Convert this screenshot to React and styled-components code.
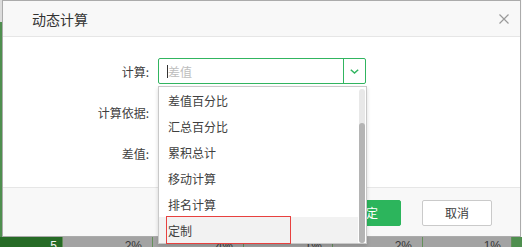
import styled, { createGlobalStyle } from "styled-components";

const GlobalStyle = createGlobalStyle`
  html, body {
    margin: 0;
    padding: 0;
  }
  body {
    font-family: "Noto Sans CJK SC", "Noto Sans", sans-serif;
    background: #fafafa;
  }
`;

const Screen = styled.div`
  position: relative;
  width: 522px;
  height: 247px;
  overflow: hidden;
`;

/* spreadsheet behind the modal */
const Backdrop = styled.div`
  display: flex;
  flex-direction: column;
  height: 100%;
`;

const SheetArea = styled.div`
  flex: 1;
  display: flex;
  justify-content: space-between;
  background: #fafafa;
`;

const SideStrip = styled.div`
  width: 2px;
  background: linear-gradient(#dcdcdc 0 22px, #4f8f4f 22px);
`;

const SheetRow = styled.div`
  display: flex;
  height: 10px;
  font-family: "Liberation Sans", Arial, sans-serif;
  font-size: 12px;
`;

const SheetCell = styled.div`
  width: ${(p) => p.$w}px;
  flex-shrink: 0;
  box-sizing: border-box;
  padding: 2px ${(p) => (p.$dark ? 5 : 10)}px 0 0;
  border-right: 1px solid #64905a;
  background: ${(p) => (p.$dark ? "#266b26" : "#a3a3a3")};
  color: ${(p) => (p.$dark ? "#f2f2f2" : "#3a3a3a")};
  text-align: right;
  line-height: 14px;
  overflow: hidden;
`;

const SheetRest = styled.div`
  flex: 1;
  background: #4f8f4f;
`;

/* modal */
const Dialog = styled.div`
  position: absolute;
  left: 2px;
  top: 0;
  width: 519px;
  height: 237px;
  box-sizing: border-box;
  border: 1px solid #ababab;
  background: #fff;
  display: flex;
  flex-direction: column;
`;

const Header = styled.div`
  height: 35px;
  flex-shrink: 0;
  display: flex;
  align-items: center;
  justify-content: space-between;
  padding: 0 11px 0 29px;
  background: #f8f8f8;
  border-bottom: 1px solid #e6e6e6;
`;

const Title = styled.div`
  font-size: 14px;
  color: #333;
`;

const CloseButton = styled.div`
  width: 10px;
  height: 10px;
  display: flex;
`;

const Body = styled.div`
  flex: 1;
  min-height: 0;
  display: flex;
  flex-direction: column;
  gap: 15px;
  padding-top: 21px;
`;

const FormRow = styled.div`
  display: flex;
  align-items: center;
  gap: 9px;
  height: 26px;
`;

const Label = styled.div`
  width: 146px;
  text-align: right;
  font-size: 12px;
  color: #404040;
`;

const SelectWrap = styled.div`
  position: relative;
  width: 208px;
  height: 26px;
`;

const SelectBox = styled.div`
  display: flex;
  height: 100%;
  box-sizing: border-box;
  border: 1px solid #31b560;
  border-radius: 2px;
`;

const InputArea = styled.div`
  flex: 1;
  display: flex;
  align-items: center;
  padding-left: 8px;
`;

const Caret = styled.span`
  width: 1px;
  height: 13px;
  background: #333;
`;

const Placeholder = styled.span`
  font-size: 12px;
  color: #bdbdbd;
`;

const ArrowBox = styled.div`
  width: 21px;
  border-left: 1px solid #31b560;
  display: flex;
  align-items: center;
  justify-content: center;
`;

const Dropdown = styled.div`
  position: absolute;
  top: calc(100% + 2px);
  left: 0;
  z-index: 10;
  width: 209px;
  height: 158px;
  box-sizing: border-box;
  border: 1px solid #c9c9c9;
  background: #fff;
  box-shadow: 0 2px 4px rgba(0, 0, 0, 0.15);
  display: flex;
`;

const OptionList = styled.div`
  flex: 1;
  display: flex;
  flex-direction: column;
`;

const Option = styled.div`
  position: relative;
  height: 26px;
  flex-shrink: 0;
  display: flex;
  align-items: center;
  padding-left: 9px;
  font-size: 12px;
  color: #404040;
  background: ${(p) => (p.$active ? "#f2f2f2" : "transparent")};
`;

const Marker = styled.div`
  position: absolute;
  left: 7px;
  top: -1px;
  width: 125px;
  height: 28px;
  box-sizing: border-box;
  border: 1px solid #e8413f;
  pointer-events: none;
`;

const ScrollTrack = styled.div`
  width: 6px;
  margin: 2px 1px 0 1px;
  border-radius: 3px;
  background: #e8e8e8;
  display: flex;
  flex-direction: column;
  justify-content: flex-end;
`;

const ScrollThumb = styled.div`
  height: 120px;
  border-radius: 3px;
  background: #b4b4b4;
`;

const Footer = styled.div`
  height: 49px;
  flex-shrink: 0;
  box-sizing: border-box;
  padding: 1px 28px 0 0;
  display: flex;
  align-items: center;
  justify-content: flex-end;
  gap: 21px;
  background: #f8f8f8;
  border-top: 1px solid #e6e6e6;
`;

const Button = styled.div`
  width: 70px;
  height: 26px;
  box-sizing: border-box;
  display: flex;
  align-items: center;
  justify-content: center;
  border-radius: 2px;
  font-size: 12px;
  border: 1px solid ${(p) => (p.$primary ? "#2cb55c" : "#cacaca")};
  background: ${(p) => (p.$primary ? "#2cb55c" : "#fff")};
  color: ${(p) => (p.$primary ? "#fff" : "#404040")};
`;

const cells = [
  { w: 63, v: "5", dark: true },
  { w: 90, v: "2%" },
  { w: 91, v: "4%" },
  { w: 89, v: "1%" },
  { w: 90, v: "2%" },
  { w: 89, v: "1%" },
];

const options = ["差值百分比", "汇总百分比", "累积总计", "移动计算", "排名计算", "定制"];

export default function App() {
  return (
    <Screen>
      <GlobalStyle />
      <Backdrop>
        <SheetArea>
          <SideStrip />
        </SheetArea>
        <SheetRow>
          {cells.map((c, i) => (
            <SheetCell key={i} $w={c.w} $dark={c.dark}>
              {c.v}
            </SheetCell>
          ))}
          <SheetRest />
        </SheetRow>
      </Backdrop>

      <Dialog>
        <Header>
          <Title>动态计算</Title>
          <CloseButton>
            <svg width="10" height="10" viewBox="0 0 10 10">
              <path d="M0.5 0.5 L9.5 9.5 M9.5 0.5 L0.5 9.5" stroke="#9a9a9a" strokeWidth="1.2" fill="none" />
            </svg>
          </CloseButton>
        </Header>

        <Body>
          <FormRow>
            <Label>计算:</Label>
            <SelectWrap>
              <SelectBox>
                <InputArea>
                  <Caret />
                  <Placeholder>差值</Placeholder>
                </InputArea>
                <ArrowBox>
                  <svg width="9" height="5" viewBox="0 0 9 5">
                    <path d="M0.8 0.8 L4.5 4 L8.2 0.8" stroke="#31b560" strokeWidth="1.5" fill="none" />
                  </svg>
                </ArrowBox>
              </SelectBox>
              <Dropdown>
                <OptionList>
                  {options.map((o) => (
                    <Option key={o} $active={o === "定制"}>
                      {o}
                      {o === "定制" && <Marker />}
                    </Option>
                  ))}
                </OptionList>
                <ScrollTrack>
                  <ScrollThumb />
                </ScrollTrack>
              </Dropdown>
            </SelectWrap>
          </FormRow>
          <FormRow>
            <Label>计算依据:</Label>
          </FormRow>
          <FormRow>
            <Label>差值:</Label>
          </FormRow>
        </Body>

        <Footer>
          <Button $primary>确定</Button>
          <Button>取消</Button>
        </Footer>
      </Dialog>
    </Screen>
  );
}
